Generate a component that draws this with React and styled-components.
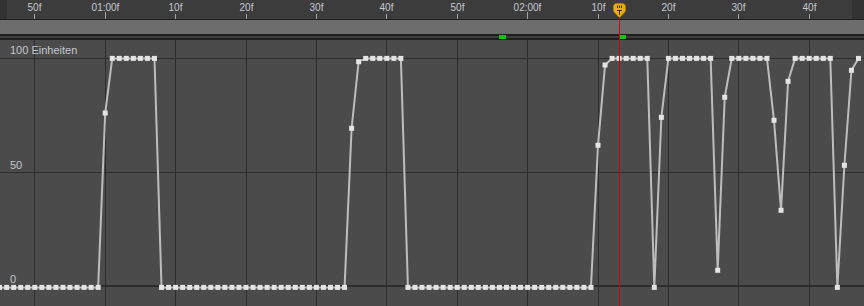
import React from 'react';
import styled, { createGlobalStyle } from 'styled-components';

const GlobalStyle = createGlobalStyle`
  html, body { margin: 0; padding: 0; background: #4b4b4b; overflow: hidden; }
  body { font-family: "Liberation Sans", Arial, sans-serif; }
`;

const FPX = 7.04;
const X0 = 34.8; // page x of frame 50
const fx = (f) => X0 + (f - 50) * FPX;
const GRAPH_TOP = 40;
const Y100 = 58.4 - GRAPH_TOP;
const Y0 = 287.4 - GRAPH_TOP;

const Panel = styled.div`
  position: relative;
  width: 864px;
  height: 306px;
  display: flex;
  flex-direction: column;
  background: #4b4b4b;
  overflow: hidden;
`;

const RulerRow = styled.div`
  display: flex;
  height: 19px;
  flex: none;
`;

const Cap = styled.div`
  width: ${(p) => p.$w}px;
  flex: none;
  background: #333333;
`;

const Ruler = styled.div`
  position: relative;
  flex: 1;
  background: #3c3c3c;
`;

const TickLabel = styled.span`
  position: absolute;
  top: 3px;
  transform: translateX(-50%);
  font-size: 10px;
  line-height: 10px;
  color: #c4c9d0;
  white-space: nowrap;
`;

const Tick = styled.div`
  position: absolute;
  bottom: 0;
  width: 1px;
  height: ${(p) => (p.$major ? 7 : 5)}px;
  background: #a4a4a4;
`;

const Rule = styled.div`
  flex: none;
  height: ${(p) => p.$h}px;
  background: #1e1e1e;
`;

const NavBar = styled.div`
  flex: none;
  height: 14px;
  background: #6d6d6d;
`;

const MarkerStrip = styled.div`
  position: relative;
  flex: none;
  height: 2px;
  background: #3c3c3c;
`;

const Marker = styled.div`
  position: absolute;
  top: -1px;
  width: ${(p) => p.$w}px;
  height: 4px;
  background: #13c213;
`;

const Graph = styled.div`
  position: relative;
  flex: 1;
`;

const GraphSvg = styled.svg`
  display: block;
  width: 100%;
  height: 100%;
`;

const ValueLabel = styled.span`
  position: absolute;
  left: 10px;
  top: ${(p) => p.$top}px;
  font-size: 11px;
  line-height: 11px;
  color: #c2c7cd;
  white-space: nowrap;
`;

const Playhead = styled.div`
  position: absolute;
  z-index: 2;
  left: 613px;
  top: 3px;
  bottom: 0;
  width: 13px;
  pointer-events: none;
`;

const PlayheadLine = styled.div`
  position: absolute;
  left: 6px;
  top: 13px;
  bottom: 0;
  width: 1px;
  background: #d80000;
`;

const PlayheadIcon = styled.svg`
  position: absolute;
  left: 0;
  top: 0;
  display: block;
`;

const rulerMarks = [
  [50, '50f'],
  [60, '01:00f'],
  [70, '10f'],
  [80, '20f'],
  [90, '30f'],
  [100, '40f'],
  [110, '50f'],
  [120, '02:00f'],
  [130, '10f'],
  [140, '20f'],
  [150, '30f'],
  [160, '40f'],
];

const keys = [];
const run = (a, b, v) => {
  for (let f = a; f <= b; f++) keys.push([f, v]);
};
run(45, 59, 'Z');
keys.push([60, 113]);
run(61, 67, 'T');
run(68, 94, 'Z');
keys.push([95, 128.3]);
keys.push([96, 61.7]);
run(97, 102, 'T');
run(103, 129, 'Z');
keys.push([130, 145.3]);
keys.push([131, 65]);
run(132, 137, 'T');
keys.push([138, 'Z']);
keys.push([139, 117.3]);
run(140, 146, 'T');
keys.push([147, 270.3]);
keys.push([148, 97.3]);
run(149, 154, 'T');
keys.push([155, 120.3]);
keys.push([156, 210.3]);
keys.push([157, 81.3]);
run(158, 163, 'T');
keys.push([164, 'Z']);
keys.push([165, 165.3]);
keys.push([166, 70.3]);
keys.push([167, 'T']);

const pts = keys.map(([f, v]) => {
  const y = v === 'T' ? Y100 : v === 'Z' ? Y0 : v - GRAPH_TOP;
  return [fx(f), y];
});

const gridXs = rulerMarks.map(([f]) => Math.floor(fx(f)) + 0.5);

function Curve() {
  return (
    <GraphSvg viewBox="0 0 864 266" preserveAspectRatio="none">
      {gridXs.map((x) => (
        <line key={x} x1={x} y1={0} x2={x} y2={266} stroke="#2d2d2d" strokeWidth="1" />
      ))}
      <line x1="0" y1={18.5} x2="864" y2={18.5} stroke="#2d2d2d" strokeWidth="1" />
      <line x1="0" y1={132.5} x2="864" y2={132.5} stroke="#2d2d2d" strokeWidth="1" />
      <rect x="0" y={245} width="864" height="2" fill="#2d2d2d" />
      <polyline
        points={pts.map((p) => p.join(',')).join(' ')}
        fill="none"
        stroke="#bdbdbd"
        strokeWidth="2"
        strokeLinejoin="round"
      />
      {pts.map(([x, y], i) => (
        <rect key={i} x={x - 2.5} y={y - 2.5} width="5" height="5" fill="#e4e4e4" />
      ))}
    </GraphSvg>
  );
}

export default function App() {
  return (
    <>
      <GlobalStyle />
      <Panel>
        <RulerRow>
          <Cap $w={7} />
          <Ruler>
            {rulerMarks.map(([f, label]) => {
              const px = Math.floor(fx(f)) - 7;
              const major = label.includes(':');
              return (
                <React.Fragment key={f}>
                  <TickLabel style={{ left: px + 0.5 }}>{label}</TickLabel>
                  <Tick $major={major} style={{ left: px }} />
                </React.Fragment>
              );
            })}
          </Ruler>
          <Cap $w={12} />
        </RulerRow>
        <Rule $h={1} />
        <NavBar />
        <Rule $h={2} />
        <MarkerStrip>
          <Marker $w={7} style={{ left: 499 }} />
          <Marker $w={6} style={{ left: 620 }} />
        </MarkerStrip>
        <Rule $h={2} />
        <Graph>
          <Curve />
          <ValueLabel $top={5.3}>100 Einheiten</ValueLabel>
          <ValueLabel $top={119.5}>50</ValueLabel>
          <ValueLabel $top={233.5}>0</ValueLabel>
        </Graph>
        <Playhead>
          <PlayheadLine />
          <PlayheadIcon width="13" height="15" viewBox="0 0 13 15">
            <path
              d="M0.5,4 C0.5,1.6 1.8,0.5 4,0.5 L9,0.5 C11.2,0.5 12.5,1.6 12.5,4 L12.5,7.2 C12.5,9.2 9.5,11.8 6.5,14.5 C3.5,11.8 0.5,9.2 0.5,7.2 Z"
              fill="#e8ae10"
              stroke="#b07e00"
              strokeWidth="1"
            />
            <path
              d="M4.5,2.5 V5 M6.5,2.5 V5 M8.5,2.5 V5 M4,7.5 H9 M6.5,7.5 V12"
              stroke="#3a2a00"
              strokeWidth="1"
              fill="none"
            />
          </PlayheadIcon>
        </Playhead>
      </Panel>
    </>
  );
}
